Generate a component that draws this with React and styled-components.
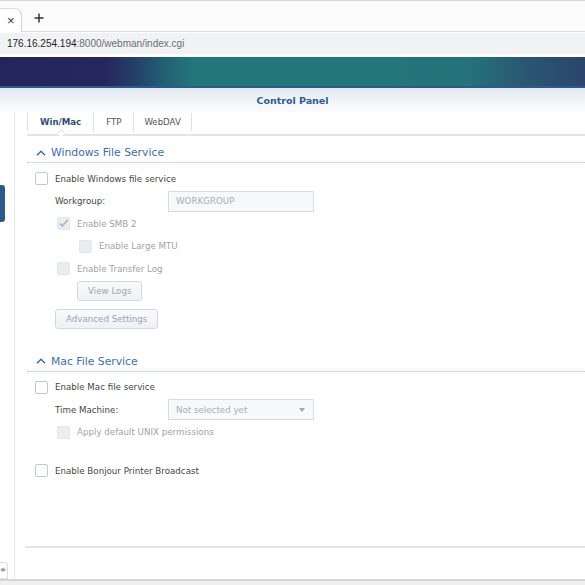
import React from 'react';
import styled, { createGlobalStyle } from 'styled-components';

const GlobalStyle = createGlobalStyle`
  html, body { margin: 0; padding: 0; }
  body {
    width: 585px;
    height: 585px;
    overflow: hidden;
    background: #fff;
    font-family: "DejaVu Sans", Verdana, sans-serif;
  }
`;

const Page = styled.div`
  width: 585px;
  height: 585px;
  display: flex;
  flex-direction: column;
  overflow: hidden;
`;

/* ---------- browser chrome ---------- */
const TabStrip = styled.div`
  height: 30px;
  border-top: 1px solid #d6d6d6;
  border-bottom: 1px solid #dadada;
  background: #fbfbfb;
  display: flex;
  align-items: flex-end;
`;

const BrowserTab = styled.div`
  width: 22px;
  height: 24px;
  box-sizing: border-box;
  background: #fff;
  border-top: 1px solid #dcdcdc;
  border-right: 1px solid #d4d4d4;
  border-top-right-radius: 8px;
  display: flex;
  align-items: center;
  padding-left: 7px;
  color: #3c3c3c;
  font-family: "Liberation Sans", Arial, sans-serif;
  font-size: 13px;
  margin-bottom: -1px;
`;

const NewTab = styled.div`
  margin-left: 12px;
  align-self: center;
  margin-top: 3px;
  display: flex;
`;

const AddressRow = styled.div`
  padding: 1px 0 3px;
  background: #fff;
`;

const AddressBar = styled.div`
  height: 21px;
  background: #f1f2f4;
  display: flex;
  align-items: center;
  padding-left: 7px;
  font-family: "Liberation Sans", Arial, sans-serif;
  font-size: 10px;
  color: #6e6e6e;
  span { color: #1f1f1f; }
`;

/* ---------- DSM window ---------- */
const Banner = styled.div`
  height: 29px;
  border-bottom: 2px solid #2b5a8e;
  background: linear-gradient(90deg, #24255d 0%, #25275f 18%, #243f68 23%, #235f74 28%, #23767a 33%, #23777a 62%, #24737a 80%, #2a5672 90%, #2b456c 100%);
`;

const TitleBar = styled.div`
  height: 24px;
  background: linear-gradient(180deg, #e2e8f0 0%, #f3f6f9 60%, #fbfcfd 100%);
  display: flex;
  align-items: center;
  justify-content: center;
  font-size: 9.5px;
  font-weight: bold;
  color: #2e5a95;
`;

const Main = styled.div`
  flex: 1;
  display: flex;
  min-height: 0;
`;

const Sidebar = styled.div`
  width: 15px;
  border-right: 1px solid #e6e6e6;
  display: flex;
  flex-direction: column;
  padding-top: 73px;
  box-sizing: border-box;
`;

const SelectedMark = styled.div`
  width: 5px;
  height: 37px;
  background: #2c5a8d;
  border-radius: 0 3px 3px 0;
`;

const SideTool = styled.div`
  margin-top: auto;
  width: 7px;
  height: 15px;
  border: 1px solid #dedede;
  border-left: none;
  border-radius: 0 4px 0 0;
  display: flex;
  align-items: center;
  font-size: 7px;
  color: #555;
  line-height: 1;
  overflow: hidden;
`;

const Content = styled.div`
  flex: 1;
  display: flex;
  flex-direction: column;
  padding-left: 12px;
  min-width: 0;
`;

const TabBar = styled.div`
  height: 22px;
  border-bottom: 2px solid #e4e4e4;
  display: flex;
  align-items: flex-start;
`;

const Tab = styled.div`
  position: relative;
  height: 18px;
  margin-top: 1px;
  padding: 0 ${({ $pad }) => $pad}px;
  display: flex;
  align-items: center;
  font-size: 8.6px;
  font-weight: ${({ $active }) => ($active ? 'bold' : 'normal')};
  color: ${({ $active }) => ($active ? '#2f4d78' : '#555')};
  border-right: 1px solid #e2e2e2;
  &:first-child { border-left: 1px solid #e2e2e2; }

  ${({ $active }) => $active && `
    &::after {
      content: '';
      position: absolute;
      left: 50%;
      bottom: -5px;
      width: 5px;
      height: 5px;
      margin-left: -3px;
      background: #fff;
      border-top: 1px solid #e4e4e4;
      border-left: 1px solid #e4e4e4;
      transform: rotate(45deg);
    }
  `}
`;

const Form = styled.div`
  flex: 1;
  padding-top: 7px;
  min-height: 0;
`;

const SectionHeader = styled.div`
  height: 19px;
  margin-top: ${({ $mt }) => $mt || 0}px;
  display: flex;
  align-items: center;
  gap: 5px;
  padding-left: 9px;
  font-size: 10.8px;
  color: #3c6eb1;
  white-space: nowrap;
`;

const Dashed = styled.div`
  height: 1px;
  background: repeating-linear-gradient(90deg, #c2cfdf 0 3px, transparent 3px 4px);
`;

const Rows = styled.div`
  padding-top: 4.5px;
`;

const Row = styled.div`
  height: 22.5px;
  margin-top: ${({ $mt }) => $mt || 0}px;
  display: flex;
  align-items: center;
  padding-left: ${({ $indent }) => $indent}px;
  white-space: nowrap;
`;

const Box = styled.span`
  width: 13px;
  height: 13px;
  box-sizing: border-box;
  flex: none;
  border: 1px solid ${({ $disabled }) => ($disabled ? '#e2e6eb' : '#c3c8cd')};
  background: ${({ $disabled }) => ($disabled ? '#e9edf2' : '#fff')};
  border-radius: 2px;
  display: flex;
  align-items: center;
  justify-content: center;
  margin-right: 7px;
`;

const Label = styled.span`
  font-size: 8.7px;
  color: ${({ $disabled }) => ($disabled ? '#9fa2a6' : '#454545')};
  width: ${({ $width }) => ($width ? `${$width}px` : 'auto')};
  flex: none;
`;

const Field = styled.div`
  width: 146px;
  height: 21px;
  box-sizing: border-box;
  border: 1px solid #d5dbe2;
  background: #f6f8fa;
  border-radius: 1px;
  display: flex;
  align-items: center;
  padding: 0 8px 0 7px;
  font-size: 8.7px;
  color: #a9aeb5;
`;

const Arrow = styled.span`
  margin-left: auto;
  width: 0;
  height: 0;
  border-left: 3.5px solid transparent;
  border-right: 3.5px solid transparent;
  border-top: 4px solid #a0a6ad;
`;

const Button = styled.div`
  height: 20px;
  box-sizing: border-box;
  padding: 0 10px;
  border: 1px solid #d3d8de;
  border-radius: 3px;
  background: linear-gradient(180deg, #f9fafb 0%, #eef1f4 100%);
  display: flex;
  align-items: center;
  font-size: 8.7px;
  color: #9ea4ab;
`;

const FooterLine = styled.div`
  height: 2px;
  background: #e6e6e6;
  margin-left: -2px;
`;

const Footer = styled.div`
  height: 31px;
`;

const BottomBar = styled.div`
  height: 4px;
  border-top: 2px solid #d4d4d4;
  background: #efefef;
`;

const Chevron = () => (
  <svg width="10" height="6" viewBox="0 0 10 6">
    <path d="M1 5.2 L5 1.2 L9 5.2" fill="none" stroke="#3c6eb1" strokeWidth="1.5" />
  </svg>
);

const Check = ({ checked, disabled }) => (
  <Box $disabled={disabled}>
    {checked && (
      <svg width="13" height="13" viewBox="0 0 13 13">
        <path d="M2.2 6.6 L5 9.4 L11.6 2.4" fill="none" stroke="#a6b7cd" strokeWidth="2" />
      </svg>
    )}
  </Box>
);

const CheckRow = ({ indent, label, checked, disabled, mt }) => (
  <Row $indent={indent} $mt={mt}>
    <Check checked={checked} disabled={disabled} />
    <Label $disabled={disabled}>{label}</Label>
  </Row>
);

export default function App() {
  return (
    <Page>
      <GlobalStyle />
      <TabStrip>
        <BrowserTab>×</BrowserTab>
        <NewTab>
          <svg width="10" height="10" viewBox="0 0 10 10">
            <path d="M5 0.5 V9.5 M0.5 5 H9.5" stroke="#333" strokeWidth="1.5" />
          </svg>
        </NewTab>
      </TabStrip>
      <AddressRow>
        <AddressBar>
          <span>176.16.254.194</span>:8000/webman/index.cgi
        </AddressBar>
      </AddressRow>
      <Banner />
      <TitleBar>Control Panel</TitleBar>
      <Main>
        <Sidebar>
          <SelectedMark />
          <SideTool>≑</SideTool>
        </Sidebar>
        <Content>
          <TabBar>
            <Tab $active $pad={12}>Win/Mac</Tab>
            <Tab $pad={12}>FTP</Tab>
            <Tab $pad={10}>WebDAV</Tab>
          </TabBar>
          <Form>
            <SectionHeader>
              <Chevron />
              Windows File Service
            </SectionHeader>
            <Dashed />
            <Rows>
              <CheckRow indent={8} label="Enable Windows file service" />
              <Row $indent={28}>
                <Label $width={113}>Workgroup:</Label>
                <Field>WORKGROUP</Field>
              </Row>
              <CheckRow indent={30} label="Enable SMB 2" checked disabled />
              <CheckRow indent={52} label="Enable Large MTU" disabled />
              <CheckRow indent={30} label="Enable Transfer Log" disabled />
              <Row $indent={50}>
                <Button>View Logs</Button>
              </Row>
              <Row $indent={28} $mt={5}>
                <Button>Advanced Settings</Button>
              </Row>
            </Rows>

            <SectionHeader $mt={21.5}>
              <Chevron />
              Mac File Service
            </SectionHeader>
            <Dashed />
            <Rows>
              <CheckRow indent={8} label="Enable Mac file service" />
              <Row $indent={28}>
                <Label $width={113}>Time Machine:</Label>
                <Field>
                  Not selected yet
                  <Arrow />
                </Field>
              </Row>
              <CheckRow indent={30} label="Apply default UNIX permissions" disabled />
              <CheckRow indent={8} mt={16} label="Enable Bonjour Printer Broadcast" />
            </Rows>
          </Form>
          <FooterLine />
          <Footer />
        </Content>
      </Main>
      <BottomBar />
    </Page>
  );
}
